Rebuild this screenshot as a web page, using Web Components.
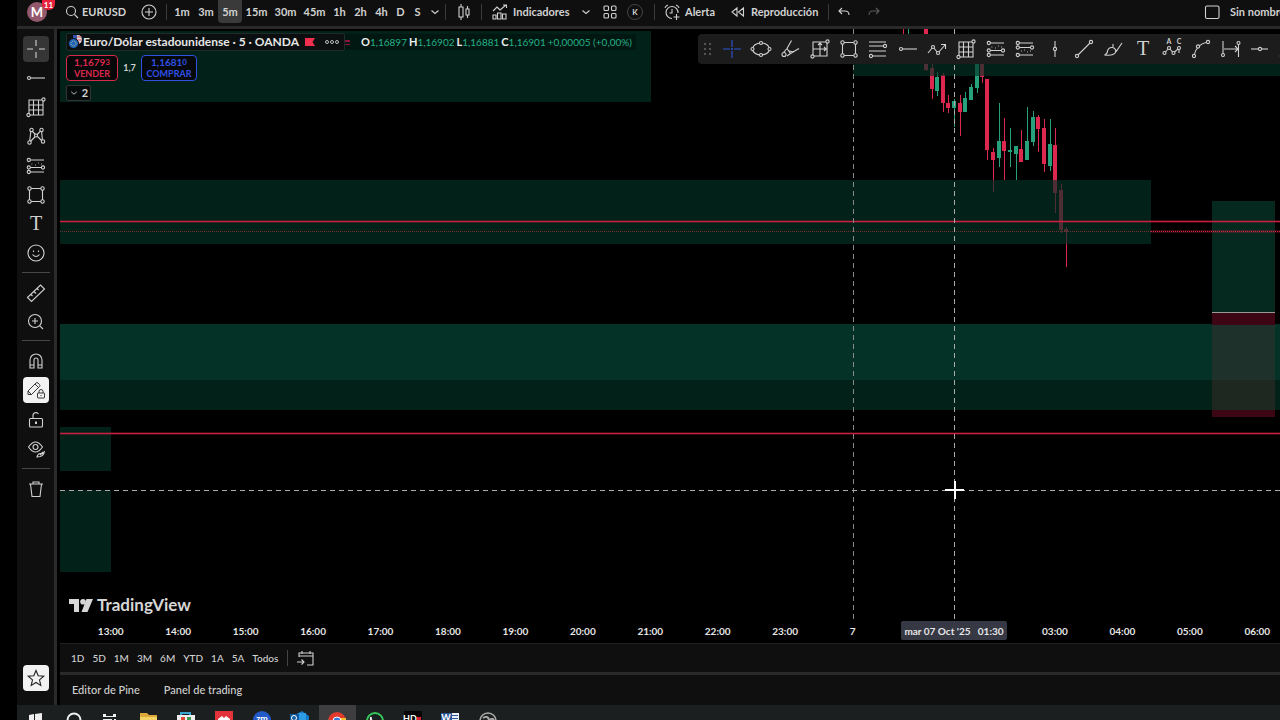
<!DOCTYPE html>
<html lang="es">
<head>
<meta charset="utf-8">
<meta name="viewport" content="width=device-width, initial-scale=1">
<title>EURUSD</title>
<style>
  html, body { margin: 0; height: 100%; background: #000; }
  body { overflow: hidden; color: #d1d1d1; font: 700 11px/16px Lato, "Noto Sans", sans-serif; }
</style>
</head>
<body>
<trading-app></trading-app>
<script>
const ICONS = {
  search: '<circle cx="9" cy="9" r="4.500"/><path d="M12.500 12.500L16 16"/>',
  plus: '<circle cx="10" cy="10" r="7"/><path d="M10 6v8M6 10h8"/>',
  chevron: '<path d="M6.500 8.500l3.500 3 3.500-3"/>',
  candles: '<path d="M5 5h4v10H5zM7 2v3M7 15v3M12 7h3v6h-3zM13.500 4v3M13.500 13v3"/>',
  indicators: '<path d="M3 17v-4h3v4zM7.500 17v-6h3.500v6zM12.500 17v-5h3.500v5zM3 9l4-4 3 3 6-5M13 3h3.500v3"/>',
  layouts: '<rect x="4" y="4" width="4.500" height="4.500" rx="1"/><rect x="11.500" y="4" width="4.500" height="4.500" rx="1"/><rect x="4" y="11.500" width="4.500" height="4.500" rx="1"/><rect x="11.500" y="11.500" width="4.500" height="4.500" rx="1"/>',
  alarm: '<path d="M10 16.500A6 6 0 1 1 16 11M10 7v4H7.500M3 6a4 4 0 0 1 3-3M14 3a4 4 0 0 1 3 3M14.500 12v6M11.500 15h6"/>',
  replay: '<path d="M9 6v8l-5-4zM15.500 6v8l-5-4z"/>',
  undo: '<path d="M8 6L5 9l3 3M5 9h6q4 0 4 4"/>',
  redo: '<path d="M12 6l3 3-3 3M15 9H9q-4 0-4 4"/>',
  square: '<rect x="3.500" y="4" width="13.500" height="12.500" rx="1.500"/>',
  cross: '<path d="M10 1v6M10 13v6M1 10h6M13 10h6"/>',
  crossfull: '<path d="M10 1v7M10 12v7M1 10h7M12 10h7M9 10h2M10 9v2"/>',
  ray: '<circle cx="3" cy="10" r="1.500"/><path d="M4.500 10H19"/>',
  gann: '<path d="M3 18V3h14M17 4v14H4M7.500 3v15M12.500 3v15M3 8h14M3 13h14"/><circle class="k" cx="2.500" cy="18" r="1.600"/><circle class="k" cx="17.500" cy="2.500" r="1.600"/>',
  pattern: '<path d="M3.500 16.500L5 4l11.500 11.500L15.500 4 3.500 16.500"/><circle class="k" cx="3.500" cy="16.500" r="1.700"/><circle class="k" cx="5.500" cy="4" r="1.700"/><circle class="k" cx="10" cy="9.500" r="1.500"/><circle class="k" cx="15.500" cy="4" r="1.700"/><circle class="k" cx="17" cy="15.500" r="1.700"/>',
  projection: '<path d="M4 4h14M4 11.500h12M4 16h14M5.500 8h.8M9 9h.8M12 7h.8M15 8h.8"/><circle class="k" cx="2.800" cy="4" r="1.600"/><circle class="k" cx="2.800" cy="11.500" r="1.600"/><circle class="k" cx="17" cy="11.500" r="1.600"/><circle class="k" cx="2.800" cy="16" r="1.600"/>',
  projection2: '<path d="M4 4h14M4 8.500h12M4 16h14M6 12h.8M9 11h.8M12 13h.8M15 12h.8"/><circle class="k" cx="2.800" cy="4" r="1.600"/><circle class="k" cx="2.800" cy="8.500" r="1.600"/><circle class="k" cx="17" cy="8.500" r="1.600"/><circle class="k" cx="2.800" cy="16" r="1.600"/>',
  rect: '<path d="M3.500 3.500h13v13h-13z"/><circle class="k" cx="3.500" cy="3.500" r="1.700"/><circle class="k" cx="16.500" cy="3.500" r="1.700"/><circle class="k" cx="3.500" cy="16.500" r="1.700"/><circle class="k" cx="16.500" cy="16.500" r="1.700"/>',
  text: '<text x="10" y="16" text-anchor="middle" font-family="Liberation Serif, serif" font-size="20" font-weight="400" fill="currentColor" stroke="none">T</text>',
  smile: '<circle cx="10" cy="10" r="8"/><path d="M6.500 11.500q3.500 4 7 0M7.500 7.500v1.500M12.500 7.500v1.500"/>',
  ruler: '<path d="M1.500 14.500L14.500 2l4 4L5.500 18.500zM5 11.500l1.500 1.500M8 8.500l2 2M11 5.500l1.500 1.500"/>',
  zoomin: '<circle cx="9" cy="9" r="6.500"/><path d="M13.800 13.800L17 17M9 6v6M6 9h6"/>',
  magnet: '<path d="M4 17V9a6 6 0 0 1 12 0v8h-4V9a2 2 0 0 0-4 0v8zM4 14h4M12 14h4"/>',
  penlock: '<g stroke-width=".9"><path d="M2 14.500V11L10 3q1-1 2 0l1.500 1.500q1 1 0 2L5.500 14.500zM9 4l3.500 3.500M2 11l3.500 3.500"/><rect x="11.500" y="13" width="7" height="5" rx=".5"/><path d="M13 13v-1.500a2 2 0 0 1 4 0V13M15 15v1"/></g>',
  unlock: '<rect x="3.500" y="8.500" width="13" height="8.500" rx="1"/><path d="M7 8.500V6a3 3 0 0 1 5.500-2"/><path stroke-width="2" d="M10 11.500v2.500"/>',
  eye: '<path d="M2.500 8Q9.500-2 16.500 8 9.500 18 2.500 8z"/><circle cx="9.500" cy="8" r="2.500"/><path d="M11 18q1-4 4-3.500t3.500-2.500q-.500 6-7.500 6zM14 16l3-3"/>',
  trash: '<path d="M3 5h14M7 5V3h6v2M4.500 5L6 17.500h8L15.500 5"/>',
  star: '<path d="M10 2.500l2.200 5.200 5.600.5-4.300 3.700 1.300 5.500L10 14.500l-4.800 2.900 1.300-5.500L2.200 8.200l5.600-.5z"/>',
  ellipse: '<ellipse cx="10" cy="10" rx="8.500" ry="6"/><circle class="k" cx="1.500" cy="10" r="1.500"/><circle class="k" cx="18.500" cy="10" r="1.500"/><circle class="k" cx="10" cy="4" r="1.500"/><circle class="k" cx="10" cy="16" r="1.500"/>',
  highlighter: '<path d="M11.500 1.500L7 9.500l3.500 5L19 9.500M7 9.500l-3 3.500v3M10.500 14.500L7 17M9 12l5 1"/><circle class="k" cx="4" cy="15.500" r="2"/>',
  position: '<path d="M3 3h14v14H3zM10 3v14M3 10h14M8 6l2-2 2 2M14 8l2 2-2 2"/><circle class="k" cx="2.500" cy="17.500" r="1.600"/><circle class="k" cx="17.500" cy="2.500" r="1.600"/>',
  fib: '<path d="M1 3h17M1 7h15M1 12h17M4 17h14"/><circle class="k" cx="17" cy="7" r="1.600"/><circle class="k" cx="3" cy="17" r="1.600"/>',
  zigzag: '<path d="M1 14l5-6 5 6 7-8M14 5.500h4.500V10"/><circle class="k" cx="6" cy="8" r="1.500"/><circle class="k" cx="11" cy="14" r="1.500"/>',
  vline: '<path d="M10 2v16"/><circle class="k" cx="10" cy="10" r="1.600"/>',
  trend: '<path d="M3 17L17 3"/><circle class="k" cx="3" cy="17" r="1.600"/><circle class="k" cx="17" cy="3" r="1.600"/>',
  brush: '<path d="M1.500 16q3-1 3-4 1-4 5-3.500 4 1 3 5-2 3.500-11 2.500zM11 9l2.500 3L19 4M10 8V5"/>',
  elliott: '<path d="M2.500 14L7 9l4.500 5L17 9v5"/><circle class="k" cx="2.500" cy="14" r="1.500"/><circle class="k" cx="7" cy="9" r="1.500"/><circle class="k" cx="11.500" cy="14" r="1.500"/><circle class="k" cx="17" cy="9" r="1.500"/><text x="7" y="5" text-anchor="middle" font-size="7" fill="currentColor" stroke="none">A</text><text x="17" y="5" text-anchor="middle" font-size="7" fill="currentColor" stroke="none">C</text>',
  curve: '<path d="M3 17q2-12 14-14"/><circle class="k" cx="3" cy="17" r="1.600"/><circle class="k" cx="7" cy="7.500" r="1.600"/><circle class="k" cx="17" cy="3" r="1.600"/>',
  range: '<path d="M2 2v16M17.500 5v13M3 10h14M14 7l3 3-3 3"/><circle class="k" cx="2" cy="16" r="1.500"/><circle class="k" cx="17.500" cy="4" r="1.500"/>',
  hline: '<path d="M1 10h17"/><circle class="k" cx="10" cy="10" r="1.600"/>',
  calendar: '<path d="M3 9V5h14v12h-6M3 8h14M6 3v3M14 3v3M1 14h7M5.500 11.500L8 14l-2.500 2.500"/>'
};

function define(name, markup, setup) {
  const template = document.createElement('template');
  template.innerHTML = markup;
  customElements.define(name, class extends HTMLElement {
    constructor() {
      super();
      this.attachShadow({ mode: 'open' }).append(template.content.cloneNode(true));
    }
    connectedCallback() { if (setup) setup(this, this.shadowRoot); }
  });
}

const BUTTON = `button { all: unset; box-sizing: border-box; display: flex; align-items: center; justify-content: center; cursor: pointer; white-space: nowrap; }
  button:focus-visible { outline: 1px solid #2962ff; }`;

define('tv-icon', `<style>
  :host { display: block; flex: none; width: 20px; height: 20px; }
  svg { display: block; width: 100%; height: 100%; fill: none; stroke: currentColor; stroke-width: 1.100; overflow: visible; }
  .k { fill: var(--knob, #131313); }
</style><svg viewBox="0 0 20 20" aria-hidden="true"></svg>`,
(host, root) => { root.querySelector('svg').innerHTML = ICONS[host.getAttribute('name')] || ''; });

define('top-bar', `<style>
  :host { display: flex; align-items: flex-start; height: 26px; background: #0f0f0f; border-bottom: 3px solid #2a2a2a; overflow: hidden; }
  ${BUTTON}
  button { height: 23px; flex: none; }
  .avatar { position: relative; width: 40px; }
  .avatar i { width: 20px; height: 20px; border-radius: 50%; background: #94586c; color: #fff; font: 700 13px/20px Lato, sans-serif; text-align: center; }
  .avatar b { position: absolute; left: 25px; top: 0; width: 13px; height: 10px; border-radius: 0 0 6px 6px; background: #e8203c; color: #fff; font: 700 8px/10px Lato, sans-serif; text-align: center; }
  .symbol { width: 75px; justify-content: flex-start; padding-left: 5px; }
  .add { width: 34px; }
  hr { flex: none; border: 0; margin: 4px 0; width: 1px; height: 16px; background: #3a3a3a; }
  .intervals { display: flex; padding-left: 3px; width: 278px; box-sizing: border-box; }
  .intervals button { width: 21px; border-radius: 0 0 4px 4px; }
  .intervals .m { width: 24px; }
  .intervals .on { background: #3a3a3a; }
  .intervals .mm { width: 29px; }
  .intervals .s { width: 17px; }
  .sq { width: 35px; }
  .ind { width: 92px; gap: 3px; justify-content: flex-start; padding-left: 8px; }
  .drop { width: 24px; }
  .lay { width: 24px; }
  .k { width: 16px; height: 16px; margin: 4px 11px 0 5px; box-sizing: border-box; border: 1px solid #444; border-radius: 50%; font-size: 8px; line-height: 10px; }
  .alert { width: 66px; gap: 3px; justify-content: flex-start; padding-left: 7px; }
  .play { width: 107px; gap: 3px; justify-content: flex-start; padding-left: 7px; }
  .un { width: 30px; }
  .re { color: #5a5a5a; }
  .name { margin-left: auto; width: 78px; gap: 8px; justify-content: flex-start; overflow: hidden; }
</style>
<button class="avatar" aria-label="Cuenta"><i>M</i><b>11</b></button>
<button class="symbol"><tv-icon name="search"></tv-icon>EURUSD</button>
<button class="add" aria-label="Comparar"><tv-icon name="plus"></tv-icon></button><hr>
<div class="intervals"><button class="m">1m</button><button class="m">3m</button><button class="m on">5m</button><button class="mm">15m</button><button class="mm">30m</button><button class="mm">45m</button><button>1h</button><button>2h</button><button>4h</button><button class="s">D</button><button class="s">S</button><button class="s" aria-label="Más intervalos"><tv-icon name="chevron"></tv-icon></button></div><hr>
<button class="sq" aria-label="Velas"><tv-icon name="candles"></tv-icon></button><hr>
<button class="ind"><tv-icon name="indicators"></tv-icon>Indicadores</button>
<button class="drop" aria-label="Favoritos"><tv-icon name="chevron"></tv-icon></button>
<button class="lay" aria-label="Plantillas"><tv-icon name="layouts"></tv-icon></button>
<button class="k">K</button><hr>
<button class="alert"><tv-icon name="alarm"></tv-icon>Alerta</button>
<button class="play"><tv-icon name="replay"></tv-icon>Reproducción</button><hr>
<button class="un" aria-label="Deshacer"><tv-icon name="undo"></tv-icon></button>
<button class="un re" aria-label="Rehacer"><tv-icon name="redo"></tv-icon></button>
<button class="name"><tv-icon name="square"></tv-icon>Sin nombre</button>`);

define('drawing-bar', `<style>
  :host { display: flex; flex-direction: column; align-items: center; background: #0f0f0f; border-right: 3px solid #2a2a2a; padding-top: 5px; --knob: #0f0f0f; }
  ${BUTTON}
  .group { display: grid; grid-auto-rows: 1fr; place-items: center; }
  .g8 { height: 234px; } .g2 { height: 58px; } .g4 { height: 118px; } .g1 { height: 30px; }
  button { width: 26px; height: 26px; border-radius: 4px; }
  .on { background: #363636; }
  .lit { background: #f2f2f2; color: #222; --knob: #f2f2f2; }
  hr { border: 0; margin: 4px 0 5px; width: 28px; height: 1px; background: #484848; }
  .last { margin: auto 0 14px; }
</style>
<div class="group g8"></div><hr><div class="group g2"></div><hr><div class="group g4"></div><hr><div class="group g1"></div>
<button class="lit last" aria-label="Favoritos"><tv-icon name="star"></tv-icon></button>`,
(host, root) => {
  const groups = ['cross ray gann pattern projection rect text smile', 'ruler zoomin', 'magnet penlock unlock eye', 'trash'];
  const marks = { cross: 'on', penlock: 'lit' };
  root.querySelectorAll('.group').forEach((g, i) => {
    g.innerHTML = groups[i].split(' ').map(n => `<button class="${marks[n] || ''}" aria-label="${n}"><tv-icon name="${n}"></tv-icon></button>`).join('');
  });
});

define('favorites-bar', `<style>
  :host { display: grid; grid-template-columns: 19px repeat(20, 1fr); align-items: center; height: 30px; border-radius: 4px; background: #1c1c1c; --knob: #1c1c1c; }
  ${BUTTON}
  svg { display: block; margin-left: 6px; fill: #555; }
  .blue { color: #2f55d4; }
</style><svg width="8" height="12"><path d="M0 0h2v2H0zM5 0h2v2H5zM0 5h2v2H0zM5 5h2v2H5zM0 10h2v2H0zM5 10h2v2H5z"/></svg>`,
(host, root) => {
  'crossfull ellipse highlighter position rect fib ray zigzag gann projection projection2 vline trend brush text elliott curve range hline trend'.split(' ').forEach((n, i) => {
    root.lastElementChild.insertAdjacentHTML('afterend', `<button class="${i ? '' : 'blue'}" aria-label="${n}"><tv-icon name="${n}"></tv-icon></button>`);
  });
});

define('chart-legend', `<style>
  :host { display: grid; gap: 4px; justify-items: start; }
  ${BUTTON}
  .row { display: flex; align-items: center; }
  .title { display: flex; align-items: center; box-sizing: border-box; width: 279px; height: 18px; border: 1px solid #1f2b29; border-radius: 2px; background: #0b0f0f; color: #e6e6e6; font-size: 12px; }
  .title svg { flex: none; }
  .title h1 { flex: none; margin: 0; width: 222px; font: inherit; white-space: nowrap; }
  .ohlc { display: flex; gap: 2px; padding: 0 4px 0 16px; background: rgba(0, 0, 0, .3); font-size: 10px; font-weight: 400; color: #24b088; white-space: nowrap; }
  .ohlc b { color: #eee; font-weight: 700; font-size: 11px; }
  .trade { box-sizing: border-box; height: 26px; border: 1px solid; border-radius: 4px; background: #06080a; display: grid; align-content: center; text-align: center; font: 700 10px/11px Lato, sans-serif; }
  .price { display: flex; justify-content: center; height: 11px; }
  .price small { font-size: 8px; line-height: 10px; }
  .trade span { font-weight: 700; font-size: 9px; }
  .sell { width: 52px; color: #d8284c; }
  .buy { width: 56px; color: #3050e4; }
  .spread { width: 23px; text-align: center; font-size: 9px; }
  .count { width: 25px; height: 16px; box-sizing: border-box; border: 1px solid #333; border-radius: 2px; background: #070a0a; }
  .count tv-icon { width: 16px; height: 16px; margin-left: -3px; }
  .mark { margin-right: -6px; z-index: 1; }
</style>
<div class="row"><div class="title">
<svg width="16" height="16"><circle cx="10.500" cy="5.500" r="4.500" fill="#ddd"/><path d="M7 3h7M6 6h9M8 9h5" stroke="#d84a5a"/><path d="M6 1h4v5H6z" fill="#3553a8"/><circle cx="6.500" cy="9.500" r="5" fill="#1f63b8" stroke="#0b0f0f"/><circle cx="6.500" cy="9.500" r="2.500" fill="none" stroke="#b9c98a" stroke-dasharray="1 1"/></svg>
<h1>Euro/Dólar estadounidense · 5 · OANDA</h1>
<svg width="38" height="16"><path d="M0 4h10L7.500 8l2.500 4H0z" fill="#f0304e"/><g fill="none" stroke="#bbb"><circle cx="22" cy="8" r="1.500"/><circle cx="27" cy="8" r="1.500"/><circle cx="32" cy="8" r="1.500"/></g></svg>
</div><svg class="mark" width="6" height="16"><path d="M0 6h5v2H0zM0 10h5v1H0z" fill="#8a1440"/></svg>
<div class="ohlc"><span><b>O</b>1,16897</span><span><b>H</b>1,16902</span><span><b>L</b>1,16881</span><span><b>C</b>1,16901</span><span>+0,00005 (+0,00%)</span></div></div>
<div class="row"><button class="trade sell"><div class="price">1,1679<small>3</small></div><span>VENDER</span></button><span class="spread">1,7</span><button class="trade buy"><div class="price">1,1681<small>0</small></div><span>COMPRAR</span></button></div>
<button class="count"><tv-icon name="chevron"></tv-icon>2</button>`);

define('price-chart', `<style>
  :host { display: grid; grid-template-rows: 1fr 21px; position: relative; overflow: hidden; min-height: 0; background: #000; }
  .plot { display: block; width: 100%; height: 100%; overflow: hidden; }
  chart-legend { position: absolute; left: 6px; top: 4px; }
  favorites-bar { position: absolute; left: 638px; right: -24px; top: 5px; }
  .brand { position: absolute; left: 9px; bottom: 28px; display: flex; gap: 4px; align-items: center; color: #d6d6d6; font: 700 17px/20px Lato, sans-serif; }
  .axis { display: grid; grid-template-columns: repeat(18, 1fr); margin: 0 -11px 0 17px; text-align: center; color: #e6e6e6; font-size: 10px; line-height: 19px; }
  .tag { position: absolute; left: 841px; bottom: 3px; width: 106px; height: 19px; line-height: 20px; border-radius: 2px; background: #363844; color: #e6e6e6; font-size: 10px; text-align: center; white-space: pre; }
</style>
<svg class="plot" role="img" aria-label="Gráfico de velas EURUSD"><g transform="translate(-60 -29)">
  <g id="candles"></g>
  <g fill="#033226" fill-opacity=".66">
    <path d="M60 31h591v71H60zM853 40h427v36H853zM60 180h1091v64H60zM60 380h1220v30H60zM60 427h51v44H60zM60 490h51v82H60z"/>
  </g>
  <path d="M60 324h1220v56H60z" fill="#043226"/>
  <path d="M1212 201h63v111h-63z" fill="#06291f"/>
  <path d="M1212 313h63v104h-63z" fill="#3c0614"/>
  <path d="M1212 325h63v55h-63z" fill="#1f312b"/><path d="M1212 380h63v30h-63z" fill="#1f2721"/>
  <path d="M1212 312.500h63" stroke="#999"/>
  <path d="M60 221.500h1220M60 433.500h1220" stroke="#c81e42" stroke-opacity=".3" stroke-width="3"/>
  <path d="M60 221.500h1220M60 433.500h1220" stroke="#c8203f"/>
  <path d="M1151 231.500h129" stroke="#c81e42" stroke-opacity=".25" stroke-width="3"/>
  <path d="M60 231.500h1091" stroke="#6c3030" stroke-dasharray="1 1"/><path d="M1151 231.500h129" stroke="#d82440" stroke-dasharray="1 1"/>
  <g stroke-dasharray="5 4"><path d="M853.500 29v593" stroke="#888"/><path d="M954.500 29v593M60 490.500h1220" stroke="#aaa"/></g>
  <path d="M945 490h19M955 481v18" stroke="#fff" stroke-width="2"/>
</g></svg>
<div class="axis"></div>
<chart-legend></chart-legend><favorites-bar></favorites-bar>
<div class="brand"><svg width="24" height="13" fill="currentColor"><path d="M0 0h10v13H5V5H0zM17.500 0H24l-5.500 13h-6z"/><circle cx="14" cy="2.800" r="2.800"/></svg>TradingView</div>
<div class="tag">mar 07 Oct '25   01:30</div>`,
(host, root) => {
  // x, high, low, body top, body bottom, direction
  const rows = [[903,28,36,28,28,0],[908,28,36,28,28,1],[926,28,71,28,70,0],[932,64,99,68,89,0],[937,72,96,77,91,1],[943,73,112,75,103,0],[948,95,113,103,108,0],[954,99,127,101,108,1],[960,95,136,103,112,0],[965,92,112,98,112,1],[971,84,100,87,100,1],[977,62,93,62,88,1],[982,60,83,60,77,0],[987,79,160,79,150,0],[993,148,192,152,160,0],[999,103,167,141,158,1],[1004,118,180,141,151,0],[1010,128,167,150,152,1],[1016,146,180,146,154,1],[1021,130,162,149,162,0],[1027,107,160,141,160,1],[1033,111,146,117,142,1],[1038,115,152,117,129,0],[1044,119,172,128,164,0],[1050,119,171,144,166,1],[1055,128,213,145,193,0],[1061,184,233,190,230,0],[1066,227,267,229,232,0]];
  root.getElementById('candles').innerHTML = rows.map(([x, h, l, t, b, up]) =>
    `<path fill="${up ? '#26a17b' : '#dc284f'}" d="M${x} ${h}h1v${l - h}h-1z${b > t ? `M${x - 2} ${t}h4v${b - t}h-4z` : ''}"/>`).join('');
  root.querySelector('.axis').innerHTML = ['13:00','14:00','15:00','16:00','17:00','18:00','19:00','20:00','21:00','22:00','23:00','7','','','03:00','04:00','05:00','06:00'].map(t => `<span>${t}</span>`).join('');
});

define('range-bar', `<style>
  :host { display: flex; align-items: center; height: 28px; padding-left: 7px; background: #0f0f0f; border-top: 1px solid #222; border-bottom: 3px solid #2a2a2a; font-weight: 500; font-size: 10px; }
  ${BUTTON}
  button { padding: 0 4px; height: 24px; }
  hr { border: 0; margin: 0 4px 0 5px; width: 1px; height: 16px; background: #444; }
</style><button>1D</button><button>5D</button><button>1M</button><button>3M</button><button>6M</button><button>YTD</button><button>1A</button><button>5A</button><button>Todos</button><hr><button aria-label="Ir a"><tv-icon name="calendar"></tv-icon></button>`);

define('bottom-tabs', `<style>
  :host { display: flex; align-items: center; gap: 24px; height: 30px; padding-left: 12px; background: #0f0f0f; font-weight: 500; }
  ${BUTTON}
</style><button>Editor de Pine</button><button>Panel de trading</button>`);

define('os-taskbar', `<style>
  :host { display: block; height: 15px; overflow: hidden; background: #1c1f1f; }
  svg { display: block; font: 700 9px Lato, sans-serif; }
</style><svg width="520" height="24" aria-hidden="true"><g transform="translate(-17 0)">
  <path fill="#3e3e40" d="M319 0h37v24h-37z"/>
  <path fill="#eee" d="M29 10l5-1v7h-5zM35 9l7-1v8h-7zM103 9h3v2h7V9h3v3h-13zM103 14h9v3h-9zM114 14h2v3h-2z"/>
  <circle cx="74" cy="15" r="6.500" fill="none" stroke="#eee" stroke-width="2"/>
  <path fill="#dca93a" d="M140 8h7l2 2h8v14h-17z"/><path fill="#f4d265" d="M140 12h17v12h-17z"/>
  <path fill="none" stroke="#39a5cf" stroke-width="2" d="M181 12V8h9v4"/><path fill="#eee" d="M177 10h18v12h-18z"/><path fill="#d94836" d="M181 12h4v3h-4z"/><path fill="#3f9b50" d="M187 12h4v3h-4z"/>
  <path fill="#e2323a" d="M215 6h18v18h-18z"/><path fill="#fff" d="M218 14l4-3 2 2 2-2 4 3v2h-12z"/>
  <circle cx="262" cy="15" r="9" fill="#2459c8"/><text x="262" y="17" text-anchor="middle" fill="#fff">zm</text>
  <path fill="#1479c8" d="M293 11l9-5 7 5v13h-16z"/><path fill="#2d9ce5" d="M298 8h8v7h-8z"/><path fill="#105aa0" d="M290 9h9v10h-9z"/><circle cx="294" cy="13" r="2.500" fill="none" stroke="#fff"/>
  <circle cx="337" cy="16" r="9" fill="#e23b2e"/><path d="M328 14l6 8h-6z" fill="#3aa757"/><path d="M338 13h8v8h-8z" fill="#f5c12e"/><circle cx="337" cy="16" r="4" fill="#3779dc" stroke="#fff"/>
  <circle cx="375" cy="16" r="8" fill="none" stroke="#35c759" stroke-width="2"/><path d="M371 12q-1 4 5 8l3-2" fill="none" stroke="#eee" stroke-width="2"/>
  <path fill="#050505" d="M404 6h18v18h-18z"/><text x="410" y="17" text-anchor="middle" fill="#fff">HD</text><path fill="#d8203a" d="M417 12h4v3h-4z"/>
  <path fill="#e9eef7" d="M450 8h9v16h-9z"/><path d="M451 10.500h7M451 13.500h7" stroke="#2b579a"/><path fill="#2b579a" d="M441 8h11v16h-11z"/><text x="446" y="16" text-anchor="middle" fill="#fff">W</text>
  <circle cx="488" cy="16" r="8" fill="#222" stroke="#aaa" stroke-width="1.500"/><path d="M483 13q5-3 6 2 5-3 5 2" stroke="#aaa" stroke-width="2" fill="none"/>
</g></svg>`);

define('trading-app', `<style>
  :host { display: grid; grid-template: auto 1fr auto / 40px 1fr; height: 100vh; box-sizing: border-box; padding-left: 17px; }
  top-bar, os-taskbar { grid-column: 1 / -1; }
  main { display: grid; grid-template-rows: 1fr auto auto; min-width: 0; min-height: 0; margin-left: 3px; }
</style><top-bar></top-bar><drawing-bar></drawing-bar><main><price-chart></price-chart><range-bar></range-bar><bottom-tabs></bottom-tabs></main><os-taskbar></os-taskbar>`);
</script>
</body>
</html>
